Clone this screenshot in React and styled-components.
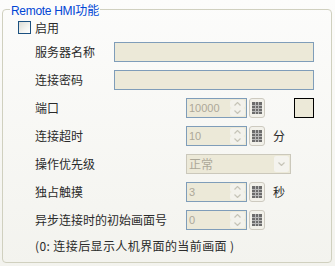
import React from "react";
import styled, { createGlobalStyle } from "styled-components";

const GlobalStyle = createGlobalStyle`
  html, body { margin: 0; padding: 0; }
  body {
    width: 335px;
    height: 266px;
    overflow: hidden;
    background: linear-gradient(#fcfcfb, #f3f3ee);
    font-family: "Noto Sans CJK SC", "Liberation Sans", sans-serif;
    font-size: 12px;
    color: #2b2b2b;
  }
`;

const Page = styled.div`
  box-sizing: border-box;
  height: 266px;
  padding: 1px 3px 0 2px;
`;

const Group = styled.fieldset`
  box-sizing: border-box;
  height: 262px;
  margin: 0;
  padding: 2px 17px 0 7px;
  border: 1px solid #d0d0bf;
  border-radius: 4px;
  min-width: 0;
`;

const Legend = styled.legend`
  margin-left: 0;
  padding: 0 1px;
  height: 17px;
  line-height: 17px;
  font-family: "Liberation Sans", "Noto Sans CJK SC", sans-serif;
  font-size: 12px;
  letter-spacing: -0.3px;
  color: #0046d5;
`;

const LegendCjk = styled.span`
  font-family: "Noto Sans CJK SC", sans-serif;
  font-size: 12px;
  letter-spacing: 0;
`;

const Body = styled.div`
  padding-left: 25px;
`;

const CheckRow = styled.label`
  display: flex;
  align-items: center;
  gap: 4px;
  height: 15px;
  margin-left: -17px;
`;

const CheckBox = styled.span`
  box-sizing: border-box;
  width: 13px;
  height: 13px;
  border: 1px solid #1c5180;
  background: linear-gradient(135deg, #dcdcd5 0%, #f4f4f0 60%, #ffffff 100%);
`;

const Rows = styled.div`
  display: flex;
  flex-direction: column;
  gap: 8px;
  margin-top: 7px;
`;

const Row = styled.div`
  display: flex;
  align-items: center;
  height: 20px;
`;

const Label = styled.span`
  flex: none;
  width: ${(p) => p.$w}px;
  line-height: 20px;
  white-space: nowrap;
`;

const TextField = styled.div`
  box-sizing: border-box;
  flex: 1;
  height: 20px;
  border: 1px solid #7f9db9;
  background: #ece9d8;
`;

const Spin = styled.div`
  box-sizing: border-box;
  display: flex;
  width: 61px;
  height: 20px;
  border: 1px solid #7f9db9;
  background: #ece9d8;
`;

const SpinValue = styled.span`
  flex: 1;
  padding-left: 2px;
  font-family: "Liberation Sans", sans-serif;
  font-size: 11px;
  line-height: 18px;
  color: #aca899;
`;

const SpinButtons = styled.div`
  display: flex;
  flex-direction: column;
  width: 15px;
  padding: 1px 1px 1px 0;
`;

const SpinBtn = styled.div`
  flex: 1;
  display: flex;
  align-items: center;
  justify-content: center;
  background: #f3f2ec;
  border-radius: 2px;
`;

const GridBtn = styled.div`
  box-sizing: border-box;
  display: flex;
  align-items: center;
  justify-content: center;
  width: 16px;
  height: 20px;
  margin-left: 2px;
  border: 1px solid #cdcac0;
  border-radius: 3px;
  background: #f2f1ea;
`;

const Unit = styled.span`
  margin-left: 8px;
  line-height: 20px;
`;

const ColorBox = styled.div`
  box-sizing: border-box;
  width: 20px;
  height: 20px;
  margin-left: auto;
  border: 1px solid #000;
  background: #ece9d8;
`;

const Select = styled.div`
  box-sizing: border-box;
  display: flex;
  width: 105px;
  height: 20px;
  border: 1px solid #cbc8bb;
  background: #ece9d8;
`;

const SelectText = styled.span`
  flex: 1;
  padding-left: 2px;
  line-height: 18px;
  color: #aca899;
`;

const SelectBtn = styled.div`
  display: flex;
  align-items: center;
  justify-content: center;
  width: 15px;
  margin: 1px;
  border-radius: 2px;
  background: #f4f3ee;
`;

const Note = styled.div`
  margin-top: 8px;
  line-height: 16px;
  letter-spacing: 0.4px;
  white-space: nowrap;
`;

const Arrow = ({ down }) => (
  <svg width="7" height="4" viewBox="0 0 7 4">
    <path
      d={down ? "M0.5 0.5 L3.5 3.5 L6.5 0.5" : "M0.5 3.5 L3.5 0.5 L6.5 3.5"}
      fill="none"
      stroke="#c6c4b8"
      strokeWidth="1.2"
    />
  </svg>
);

const GridIcon = () => (
  <svg width="10" height="12" viewBox="0 0 10 12">
    <rect x="0" y="0" width="10" height="12" fill="#6c6c6c" />
    <g stroke="#b8b8b8" strokeWidth="1">
      <line x1="3.5" y1="0" x2="3.5" y2="12" />
      <line x1="6.5" y1="0" x2="6.5" y2="12" />
      <line x1="0" y1="3.5" x2="10" y2="3.5" />
      <line x1="0" y1="6.5" x2="10" y2="6.5" />
      <line x1="0" y1="9.5" x2="10" y2="9.5" />
    </g>
  </svg>
);

const SpinBox = ({ value }) => (
  <>
    <Spin>
      <SpinValue>{value}</SpinValue>
      <SpinButtons>
        <SpinBtn>
          <Arrow />
        </SpinBtn>
        <SpinBtn>
          <Arrow down />
        </SpinBtn>
      </SpinButtons>
    </Spin>
    <GridBtn>
      <GridIcon />
    </GridBtn>
  </>
);

export default function App() {
  return (
    <>
      <GlobalStyle />
      <Page>
        <Group>
          <Legend>
            Remote HMI<LegendCjk>功能</LegendCjk>
          </Legend>
          <Body>
            <CheckRow>
              <CheckBox />
              启用
            </CheckRow>
            <Rows>
              <Row>
                <Label $w={79}>服务器名称</Label>
                <TextField />
              </Row>
              <Row>
                <Label $w={79}>连接密码</Label>
                <TextField />
              </Row>
              <Row>
                <Label $w={151}>端口</Label>
                <SpinBox value="10000" />
                <ColorBox />
              </Row>
              <Row>
                <Label $w={151}>连接超时</Label>
                <SpinBox value="10" />
                <Unit>分</Unit>
              </Row>
              <Row>
                <Label $w={151}>操作优先级</Label>
                <Select>
                  <SelectText>正常</SelectText>
                  <SelectBtn>
                    <Arrow down />
                  </SelectBtn>
                </Select>
              </Row>
              <Row>
                <Label $w={151}>独占触摸</Label>
                <SpinBox value="3" />
                <Unit>秒</Unit>
              </Row>
              <Row>
                <Label $w={151}>异步连接时的初始画面号</Label>
                <SpinBox value="0" />
              </Row>
            </Rows>
            <Note>(0: 连接后显示人机界面的当前画面 )</Note>
          </Body>
        </Group>
      </Page>
    </>
  );
}
